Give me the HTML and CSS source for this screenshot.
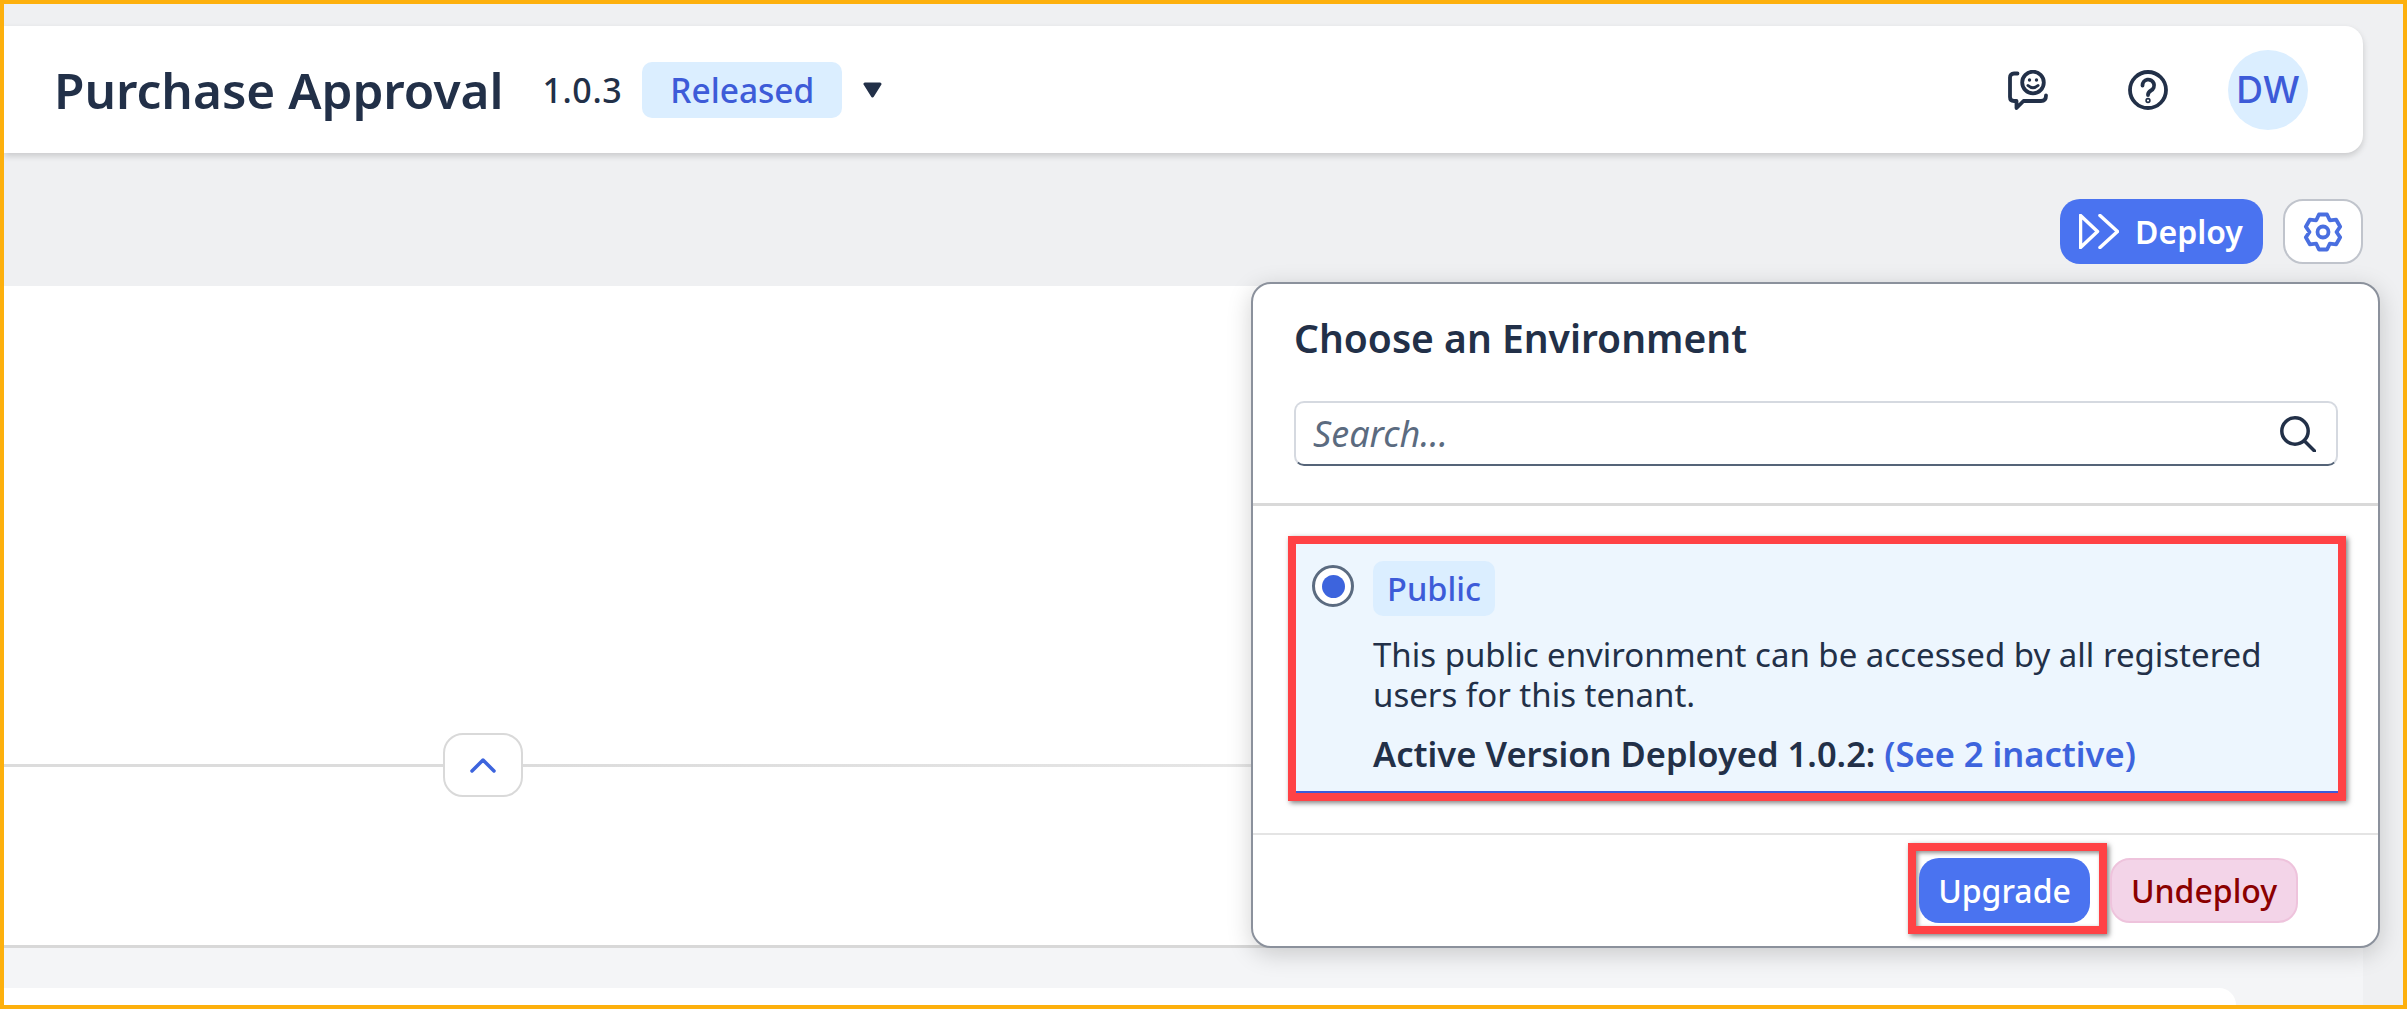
FILE: index.html
```html
<!DOCTYPE html>
<html>
<head>
    <link rel="stylesheet" href="styles.css">
</head>
<body>
    <div class="frame">
        <header class="topbar">
            <div class="topbar-left">
                <h1 class="app-title">Purchase Approval</h1>
                <span class="version">1.0.3</span>
                <span class="tag tag-released">Released</span>
                <svg class="caret" viewBox="0 0 19 16"><path d="M2 2H17L9.500 14Z" fill="#223048" stroke="#223048" stroke-width="3" stroke-linejoin="round"/></svg>
            </div>
            <div class="topbar-right">
                <svg class="top-icon" viewBox="0 0 40 40" fill="none" stroke="#223048" stroke-width="3.800" stroke-linecap="round" stroke-linejoin="round">
                    <path d="M9.500 3.500H6Q2 3.500 2 7.500V27Q2 31 6 31H8.500V38L15.500 31H33Q38 31 38 25.500"/>
                    <circle cx="25" cy="12.500" r="10.800"/>
                    <path d="M20 15.500Q25 20 30 15.500" stroke-width="3"/>
                    <circle cx="21.500" cy="10" r="1.700" fill="#223048" stroke="none"/>
                    <circle cx="28.500" cy="10" r="1.700" fill="#223048" stroke="none"/>
                </svg>
                <svg class="top-icon" viewBox="0 0 40 40" fill="none" stroke="#223048" stroke-width="3.800" stroke-linecap="round" stroke-linejoin="round">
                    <circle cx="20" cy="20" r="18"/>
                    <path d="M14.500 15.500A5.800 5.800 0 1 1 23 20.500C21 21.700 20 22.500 20 25"/>
                    <circle cx="20" cy="30.500" r="0.800"/>
                </svg>
                <div class="avatar">DW</div>
            </div>
        </header>

        <div class="toolbar">
            <button class="btn btn-primary btn-deploy">
                <svg class="deploy-icon" viewBox="0 0 40 35" fill="none" stroke="#fff" stroke-width="3.500" stroke-linecap="round" stroke-linejoin="round">
                    <path d="M1.500 1.500L18.500 17.500L1.500 33.500Z"/>
                    <path d="M21 1.500L38.500 17.500L21 33.500"/>
                </svg>
                Deploy
            </button>
            <button class="btn-settings">
                <svg class="gear-icon" viewBox="0 0 40 40" fill="none" stroke="#4a6fe0" stroke-width="3.800" stroke-linejoin="round">
                    <polygon points="15.950,2.500 24.050,2.500 26.750,8.300 33.200,7.700 37.200,14.700 33.500,20 37.200,25.300 33.200,32.300 26.750,31.700 24.050,37.500 15.950,37.500 13.250,31.700 6.800,32.300 2.800,25.300 6.500,20 2.800,14.700 6.800,7.700 13.250,8.300"/>
                    <circle cx="20" cy="20" r="5.500"/>
                </svg>
            </button>
        </div>

        <main class="canvas">
            <div class="collapse-row">
                <div class="rule rule-left"></div>
                <button class="collapse-btn">
                    <svg class="chevron" viewBox="0 0 26 16" fill="none" stroke="#3d64dd" stroke-width="3.500" stroke-linecap="round" stroke-linejoin="round"><path d="M2 14L13 3L24 14"/></svg>
                </button>
                <div class="rule rule-right"></div>
            </div>
        </main>

        <div class="lower">
            <div class="lower-panel"></div>
        </div>

        <section class="popover">
            <div class="popover-head">
                <h2 class="popover-title">Choose an Environment</h2>
                <div class="search">
                    <span class="search-text">Search...</span>
                    <svg class="search-icon" viewBox="0 0 36 36" fill="none" stroke="#223048" stroke-width="3.500" stroke-linecap="round"><circle cx="15" cy="15" r="13.200"/><path d="M24.500 25L34.500 35"/></svg>
                </div>
            </div>

            <div class="env-list">
                <div class="highlight">
                    <div class="env-item">
                        <span class="radio"><span class="radio-dot"></span></span>
                        <div class="env-body">
                            <span class="tag tag-public">Public</span>
                            <p class="env-desc">This public environment can be accessed by all registered users for this tenant.</p>
                            <p class="env-active">Active Version Deployed 1.0.2: <a class="env-link">(See 2 inactive)</a></p>
                        </div>
                    </div>
                </div>
            </div>

            <div class="popover-foot">
                <div class="highlight highlight-btn">
                    <button class="btn btn-primary btn-upgrade">Upgrade</button>
                </div>
                <button class="btn btn-undeploy">Undeploy</button>
            </div>
        </section>
    </div>
</body>
</html>
```

FILE: styles.css
```css
* {
    box-sizing: border-box;
}

body {
    margin: 0;
    font-family: "Noto Sans", sans-serif;
    color: #223048;
}

.frame {
    position: relative;
    width: 2407px;
    height: 1009px;
    border: 4px solid #fdb00d;
    background-color: #eff0f2;
    display: flex;
    flex-direction: column;
    overflow: hidden;
}

.topbar {
    height: 127px;
    margin: 22px 40px 0 0;
    padding: 0 55px 0 50px;
    background-color: #fff;
    border-radius: 0 18px 18px 0;
    box-shadow: 0 3px 6px rgba(0, 0, 0, 0.16);
    display: flex;
    align-items: center;
    justify-content: space-between;
}

.topbar-left,
.topbar-right {
    display: flex;
    align-items: center;
}

.app-title {
    margin: 0 39px 0 0;
    font-size: 49.500px;
    font-weight: 600;
}

.version {
    margin-right: 20px;
    font-size: 34px;
    font-weight: 500;
    letter-spacing: 0.6px;
}

.tag {
    display: inline-block;
    background-color: #dbeeff;
    color: #3d5bd8;
    border-radius: 10px;
}

.tag-released {
    width: 200px;
    height: 56px;
    font-size: 33.500px;
    font-weight: 500;
    line-height: 56px;
    text-align: center;
}

.caret {
    width: 19px;
    height: 16px;
    margin-left: 21px;
}

.top-icon {
    width: 40px;
    height: 40px;
    margin-right: 80px;
}

.top-icon + .avatar {
    margin-left: -20px;
}

.avatar {
    width: 80px;
    height: 80px;
    border-radius: 50%;
    background-color: #dbeeff;
    color: #3d5bd8;
    font-family: Inter, sans-serif;
    font-size: 37px;
    font-weight: 500;
    line-height: 80px;
    text-align: center;
}

.toolbar {
    height: 65px;
    margin: 46px 40px 0 0;
    display: flex;
    justify-content: flex-end;
    gap: 20px;
}

.btn {
    border: 0;
    border-radius: 20px;
    font-family: inherit;
    font-size: 32px;
    font-weight: 500;
}

.btn-primary {
    background-color: #4a73f0;
    color: #fff;
}

.btn-deploy {
    width: 203px;
    height: 65px;
    padding: 0 0 0 19px;
    font-weight: 600;
    display: flex;
    align-items: center;
    gap: 16px;
}

.deploy-icon {
    width: 40px;
    height: 35px;
}

.btn-settings {
    width: 80px;
    height: 65px;
    padding: 0;
    background-color: #fff;
    border: 2px solid #c0c4cc;
    border-radius: 20px;
    display: flex;
    align-items: center;
    justify-content: center;
}

.gear-icon {
    width: 40px;
    height: 40px;
}

.canvas {
    height: 662px;
    margin: 22px 40px 0 0;
    padding-top: 447px;
    background-color: #fff;
    border-bottom: 3px solid #d8d8d8;
}

.collapse-row {
    display: flex;
    align-items: center;
}

.rule {
    height: 3px;
    background-color: #dcdcdc;
}

.rule-left {
    width: 439px;
}

.rule-right {
    flex: 1;
    background: linear-gradient(to right, #dcdcdc, #e8e8e8 50%, #f7f7f7 85%);
}

.collapse-btn {
    width: 80px;
    height: 64px;
    padding: 0;
    background-color: #fff;
    border: 2px solid #d9d9d9;
    border-radius: 20px;
    display: flex;
    align-items: center;
    justify-content: center;
}

.chevron {
    width: 26px;
    height: 16px;
}

.lower {
    flex: 1;
    margin-right: 40px;
    padding-top: 40px;
    background-color: #f4f5f7;
}

.lower-panel {
    height: 100%;
    margin-right: 127px;
    background-color: #fff;
    border-top-right-radius: 30px;
}

.popover {
    position: absolute;
    top: 278px;
    left: 1247px;
    width: 1129px;
    height: 666px;
    background-color: #fff;
    border: 2px solid #8b919c;
    border-radius: 20px;
    box-shadow: 0 6px 24px rgba(0, 0, 0, 0.18);
    display: flex;
    flex-direction: column;
}

.popover-head {
    height: 222px;
    padding: 26px 40px 0 41px;
    border-bottom: 3px solid #d9d9d9;
}

.popover-title {
    margin: 0 0 35px;
    font-size: 39px;
    font-weight: 600;
    line-height: 56px;
}

.search {
    height: 65px;
    padding: 0 20px 0 17px;
    border: 2px solid #d5d9e0;
    border-bottom-color: #556478;
    border-radius: 10px;
    display: flex;
    align-items: center;
    justify-content: space-between;
}

.search-text {
    font-size: 36px;
    font-style: italic;
    color: #5b6b80;
}

.search-icon {
    width: 36px;
    height: 36px;
}

.env-list {
    height: 329px;
    padding: 30px 32px 32px 35px;
    border-bottom: 2px solid #e4e4e4;
}

.highlight {
    border: 8px solid #ff4245;
    box-shadow: 2px 2px 5px rgba(0, 0, 0, 0.5), inset 2px 2px 4px rgba(0, 0, 0, 0.45);
}

.env-item {
    height: 249px;
    padding: 17px 16px 0;
    background-color: #edf6fe;
    border-bottom: 2px solid #3d5bd8;
    display: flex;
    gap: 19px;
}

.radio {
    width: 42px;
    height: 42px;
    margin-top: 4px;
    flex: none;
    background-color: #fff;
    border: 3px solid #5b6b80;
    border-radius: 50%;
    display: flex;
    align-items: center;
    justify-content: center;
}

.radio-dot {
    width: 23px;
    height: 23px;
    background-color: #3d64dd;
    border-radius: 50%;
}

.tag-public {
    width: 122px;
    height: 55px;
    font-size: 32.500px;
    font-weight: 500;
    line-height: 55px;
    text-align: center;
}

.env-desc {
    margin: 19px 0 0;
    font-size: 33px;
    line-height: 40px;
}

.env-active {
    margin: 19px 0 0;
    font-size: 34.500px;
    font-weight: 600;
    line-height: 40px;
}

.env-link {
    color: #3d64dd;
}

.popover-foot {
    flex: 1;
    padding: 8px 80px 0 0;
    display: flex;
    justify-content: flex-end;
    align-items: flex-start;
    gap: 3px;
}

.highlight-btn {
    padding: 7px 9px 3px 3px;
    width: 199px;
    height: 91px;
}

.btn-upgrade {
    display: block;
    width: 171px;
    height: 65px;
    padding: 0;
}

.btn-undeploy {
    width: 188px;
    height: 65px;
    margin-top: 15px;
    padding: 0;
    background-color: #f3d4e8;
    border: 2px solid #eec3dc;
    color: #8b0000;
}
```
